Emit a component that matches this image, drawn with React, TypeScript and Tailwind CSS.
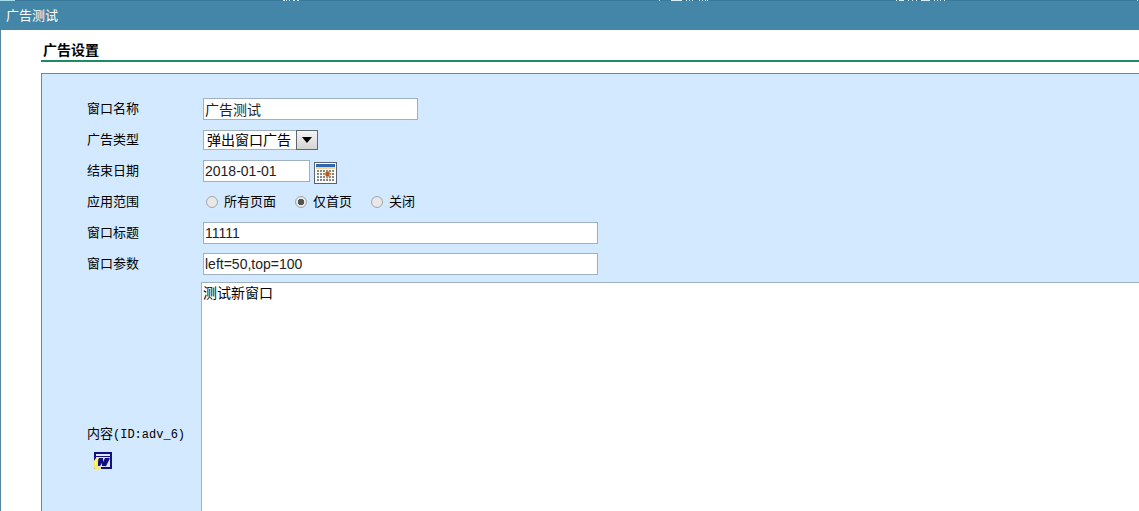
import React, { useState } from 'react';

const inputClass =
  "h-[22px] border border-[#9fb0c0] bg-white px-px text-sm leading-5 text-[#222] outline-none font-['Liberation_Sans','Noto_Sans_CJK_SC',sans-serif]";

const scopes = ['所有页面', '仅首页', '关闭'];

interface RowProps {
  label: string;
  htmlFor?: string;
  children: React.ReactNode;
}

const Row: React.FC<RowProps> = ({ label, htmlFor, children }) => (
  <div className="flex h-[31px] items-center">
    <label htmlFor={htmlFor} className="w-[116px] shrink-0 pt-px">
      {label}
    </label>
    {children}
  </div>
);

const CalendarIcon = () => (
  <svg width="23" height="22" viewBox="0 0 23 22" shapeRendering="crispEdges">
    <rect x="0.5" y="0.5" width="22" height="21" fill="#fdfdfa" stroke="#59646e" />
    <rect x="2" y="2" width="19" height="3" fill="#2f68b0" />
    <rect x="2" y="5" width="19" height="2" fill="#f3d595" />
    {[8, 11, 14, 17].map((y) => (
      <path key={y} d={`M3 ${y + 1}H20`} stroke="#85888c" strokeWidth="2" strokeDasharray="2 1" />
    ))}
    <path
      d="M13.500 7.500l1.500 2.500 3 2-3 2-1.500 3-1.500-3-3-2 3-2z"
      fill="#d08a4e"
      shapeRendering="auto"
    />
    <rect x="12" y="10" width="3" height="4" fill="#b05a28" />
  </svg>
);

const EditorIcon = () => (
  <svg width="20" height="18" viewBox="0 0 20 18" shapeRendering="crispEdges">
    <rect x="2" y="1" width="16" height="15" fill="#dfe5fa" stroke="#10107e" strokeWidth="2" />
    <path d="M3 4.5H17" stroke="#10107e" />
    <g shapeRendering="auto">
      <path d="M5 6h5l0 4 2-4h4l-4 8h-3v-3l-2 3H5z" fill="#10107e" />
      <path d="M16 6l-4 8" stroke="#10107e" strokeWidth="2" />
      <path d="M6 5L3 6 1 9v5l-1 2 4 2 4-1v-2H5l-1-3 1-3z" fill="#f3ec5c" />
      <path d="M5 6.500L2.500 9v4" fill="none" stroke="#fffde0" />
    </g>
  </svg>
);

export default function App() {
  const [scope, setScope] = useState('仅首页');

  return (
    <div className="flex h-screen flex-col overflow-hidden bg-white font-['Liberation_Sans','Noto_Sans_CJK_SC',sans-serif] text-[13px] text-black">
      <header className="relative flex h-[30px] shrink-0 items-center border-t border-[#38789a] bg-[#4486a8] px-[6px] text-white">
        {/* lower edge of the list header behind the window */}
        <svg className="absolute -top-px left-0" width="1139" height="2" shapeRendering="crispEdges">
          <path d="M0 .5H15" stroke="#a5dcec" />
          <path
            d="M283 .5h2m1 0h1m2 0h1m3 0h2m2 0h2M659 .5h1m11 0h11m4 0h1m2 0h1m2 0h1m6 0h1m2 0h1m2 0h1m1 0h1M896 .5h1m2 0h5m4 0h1m3 0h1m3 0h1m4 0h9m4 0h1m2 0h1m2 0h1m3 0h1M1137 .5h1"
            stroke="#d5edf3"
          />
        </svg>
        <h1>广告测试</h1>
      </header>

      <main className="flex min-h-0 grow flex-col border-l border-[#5686a0] pl-10">
        <h2 className="mt-[10px] h-[22px] shrink-0 border-b-2 border-[#1f8a66] pl-[2px] text-sm leading-5 font-bold">
          广告设置
        </h2>

        <form className="mt-[11px] grow border-t border-l border-[#738494] bg-[#d2e9ff] pt-[19px] pl-[45px]">
          <Row label="窗口名称" htmlFor="name">
            <input id="name" defaultValue="广告测试" className={`${inputClass} w-[215px]`} />
          </Row>

          <Row label="广告类型" htmlFor="type">
            <div className="relative">
              <select
                id="type"
                className="block h-5 w-[115px] appearance-none border border-[#9fb0c0] bg-white pl-[3px] text-sm leading-[18px] outline-none"
              >
                <option>弹出窗口广告</option>
              </select>
              <span className="pointer-events-none absolute inset-y-0 right-0 flex w-[22px] items-center justify-center border border-[#62676c] bg-linear-to-b from-[#f4f4f4] to-[#d4d4d4]">
                <svg width="10" height="6" viewBox="0 0 10 6">
                  <path d="M0 0h10L5 6z" fill="#000" />
                </svg>
              </span>
            </div>
          </Row>

          <Row label="结束日期" htmlFor="date">
            <input id="date" defaultValue="2018-01-01" className={`${inputClass} w-[107px]`} />
            <button type="button" aria-label="结束日期" className="ml-1 pt-1">
              <CalendarIcon />
            </button>
          </Row>

          <div role="radiogroup" aria-label="应用范围">
            <Row label="应用范围">
              <div className="flex gap-[19px] pt-px pl-[3px]">
                {scopes.map((item) => (
                  <label key={item} className="flex items-center gap-[6px]">
                    <input
                      type="radio"
                      name="scope"
                      checked={scope === item}
                      onChange={() => setScope(item)}
                      className="size-3 appearance-none rounded-full border border-[#a3a6a8] bg-[#e8e8e8] checked:bg-[radial-gradient(circle,#555_0_3px,#e8e8e8_3px)]"
                    />
                    {item}
                  </label>
                ))}
              </div>
            </Row>
          </div>

          <Row label="窗口标题" htmlFor="title">
            <input id="title" defaultValue="11111" className={`${inputClass} w-[395px]`} />
          </Row>

          <Row label="窗口参数" htmlFor="params">
            <input id="params" defaultValue="left=50,top=100" className={`${inputClass} w-[395px]`} />
          </Row>

          <div className="flex items-center pt-[3px]">
            <div className="w-[114px] shrink-0">
              <label htmlFor="content" className="block leading-5">
                内容
                <span className="font-['Liberation_Mono',monospace] text-xs">(ID:adv_6)</span>
              </label>
              <button type="button" aria-label="内容" className="mt-2 ml-[6px] block">
                <EditorIcon />
              </button>
            </div>
            <textarea
              id="content"
              defaultValue="测试新窗口"
              className="block h-[330px] grow resize-none border border-r-0 border-[#9fb0c0] bg-white px-px text-sm leading-5 outline-none"
            />
          </div>
        </form>
      </main>
    </div>
  );
}
